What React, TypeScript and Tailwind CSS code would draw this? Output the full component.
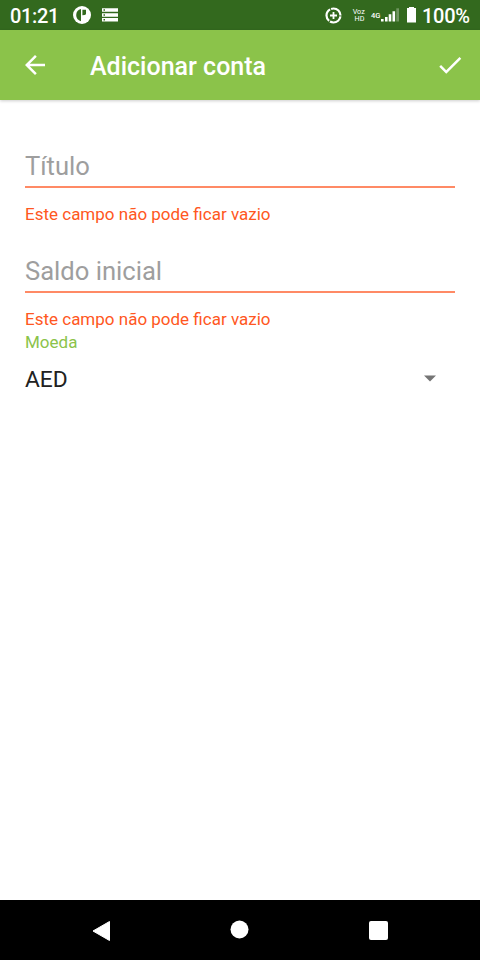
import React from 'react';

function StatusBar() {
  return (
    <div className="flex h-[30px] w-full items-center bg-[#33691e] text-white">
      <span className="ml-[10px] w-[63px] pt-[2px] text-[20px] font-medium leading-[28px] tracking-[-0.35px]">01:21</span>
      <svg className="h-[18px] w-[18px]" viewBox="0 0 18 18">
        <circle cx="9" cy="9" r="9" fill="#fff" />
        <path d="M8 3v12.2A6.4 6.4 0 0 1 3.2 9 6.4 6.4 0 0 1 8 3z" fill="#33691e" />
        <path d="M9.4 3.8h3.6v4.4q-1 1-3.6 1z" fill="#33691e" />
      </svg>
      <svg className="ml-[11px] h-[14px] w-4" viewBox="0 0 16 14">
        <path d="M0 .3h16v3.5H0zM0 5.2h16v3.5H0zM0 10.1h16v3.5H0z" fill="#fff" />
        <path d="M1.5 1.3h1.5v1.5H1.5zM1.5 6.2h1.5v1.5H1.5zM1.5 11.1h1.5v1.5H1.5z" fill="#33691e" />
      </svg>
      <svg className="ml-[207px] h-[18px] w-[18px]" viewBox="0 0 18 18" fill="none" stroke="#fff">
        <circle cx="8.5" cy="9.5" r="7" strokeWidth="2.2" strokeDasharray="13.6 1.06" strokeDashoffset="-1" />
        <path d="M8.5 6v7M5 9.5h7" strokeWidth="1.8" />
      </svg>
      <div className="ml-[9px] flex w-[14px] flex-col items-center text-[8px] leading-[7px]">
        <span className="h-[7px] scale-x-90">Voz</span>
        <span className="h-[7px] scale-x-90">HD</span>
      </div>
      <span className="ml-[5px] w-[10px] pt-[2px] text-[7.5px] font-medium leading-[10px]">4G</span>
      <svg className="h-[14px] w-[18px]" viewBox="0 0 18 14">
        <path d="M0 11h2.6v2.5H0zM4 9h2.6v4.5H4zM7.7 6.2h2.6v7.3H7.7zM11.5 3.2h2.6v10.3h-2.6z" fill="#fff" />
        <path d="M15.3 .3H18v13.2h-2.7z" fill="#fff" fillOpacity=".3" />
      </svg>
      <svg className="ml-2 h-4 w-[9px]" viewBox="0 0 9 16">
        <path d="M2 0h5v1H9V15.5H0V1h2z" fill="#fff" />
      </svg>
      <span className="ml-[6px] pt-[2px] text-[20px] font-medium leading-[28px] tracking-[-0.3px]">100%</span>
    </div>
  );
}

function AppBar() {
  return (
    <header className="flex h-[70px] w-full items-center bg-[#8bc34a] text-white shadow-[0_1px_3px_rgba(0,0,0,0.2)]">
      <svg className="ml-5 h-[30px] w-[30px]" viewBox="0 0 24 24" fill="#fff">
        <path d="M20 11H7.83l5.59-5.59L12 4l-8 8 8 8 1.41-1.41L7.83 13H20v-2z" />
      </svg>
      <h1 className="ml-10 grow pt-[3px] text-[25px] font-medium leading-[30px]">Adicionar conta</h1>
      <svg className="mr-[15px] h-[30px] w-[30px]" viewBox="0 0 24 24" fill="#fff">
        <path d="M9 16.17L4.83 12l-1.42 1.41L9 19 21 7l-1.41-1.41z" />
      </svg>
    </header>
  );
}

function Field({ label }: { label: string }) {
  return (
    <div className="h-[105px]">
      <div className="h-[42px] border-b-2 border-[#ff8a65] text-[25.6px] leading-[41px] text-[#9e9e9e]">{label}</div>
      <p className="mt-[15px] text-[17px] leading-[22px] text-[#ff5722]">Este campo não pode ficar vazio</p>
    </div>
  );
}

export default function App() {
  return (
    <div className="flex h-[960px] w-[480px] flex-col bg-white font-[Roboto,sans-serif]">
      <StatusBar />
      <AppBar />
      <main className="grow px-[25px] pt-[46px]">
        <Field label="Título" />
        <Field label="Saldo inicial" />
        <p className="-mt-[25px] text-[17px] leading-[22px] text-[#8bc34a]">Moeda</p>
        <div className="mt-[11px] flex h-[30px] items-center justify-between text-[22.8px] text-[#212121]">
          <span className="pt-[2px] leading-[30px]">AED</span>
          <svg className="mr-[19px] mb-[2px] h-[7px] w-3" viewBox="0 0 12 7">
            <path d="M0 .5h12l-6 6z" fill="#757575" />
          </svg>
        </div>
      </main>
      <nav className="flex h-[60px] items-center bg-black">
        <svg className="ml-[92px] mt-[1px] h-[22px] w-[19px]" viewBox="0 0 19 22">
          <path d="M17.5 1.5v19L1 11z" fill="#fff" stroke="#fff" strokeLinejoin="round" />
        </svg>
        <svg className="ml-[119px] h-[20px] w-[20px]" viewBox="0 0 20 20">
          <circle cx="9.5" cy="9.5" r="9" fill="#fff" />
        </svg>
        <span className="ml-[119px] mt-[1px] h-[19px] w-[19px] rounded-[2px] bg-white" />
      </nav>
    </div>
  );
}
